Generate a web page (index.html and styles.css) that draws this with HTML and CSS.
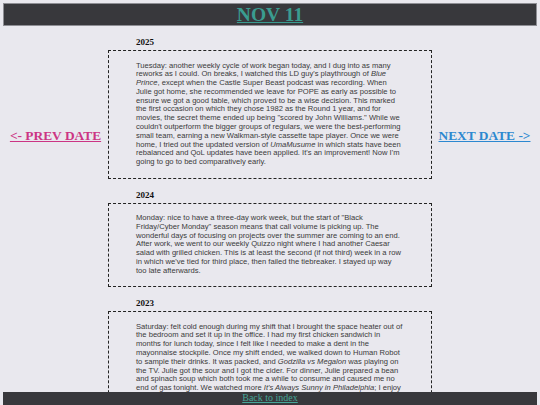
FILE: index.html
```html
<!DOCTYPE html>
<html lang="en">
<head>
    <meta charset="UTF-8">
    <meta name="viewport" content="width=device-width, initial-scale=1.0">
    <title>Nov 11</title>
    <link rel="stylesheet" href="styles.css">
</head>
<body>

    <header class="topbar">
        <a class="dateTitle" href="#">NOV 11</a>
    </header>

    <div class="layout">
        <nav class="sideNav">
            <a class="prevLink" href="#">&lt;- PREV DATE</a>
        </nav>

        <main class="entries">
            <h3 class="year">2025</h3>
            <div class="entry">
                Tuesday: another weekly cycle of work began today, and I dug into as many reworks as I could. On breaks, I watched this LD guy's playthrough of <i>Blue Prince</i>, except when the Castle Super Beast podcast was recording. When Julie got home, she recommended we leave for POPE as early as possible to ensure we got a good table, which proved to be a wise decision. This marked the first occasion on which they chose 1982 as the Round 1 year, and for movies, the secret theme ended up being "scored by John Williams." While we couldn't outperform the bigger groups of regulars, we were the best-performing small team, earning a new Walkman-style cassette tape player. Once we were home, I tried out the updated version of <i>UmaMusume</i> in which stats have been rebalanced and QoL updates have been applied. It's an improvement! Now I'm going to go to bed comparatively early.
            </div>

            <h3 class="year">2024</h3>
            <div class="entry">
                Monday: nice to have a three-day work week, but the start of "Black Friday/Cyber Monday" season means that call volume is picking up. The wonderful days of focusing on projects over the summer are coming to an end. After work, we went to our weekly Quizzo night where I had another Caesar salad with grilled chicken. This is at least the second (if not third) week in a row in which we've tied for third place, then failed the tiebreaker. I stayed up way too late afterwards.
            </div>

            <h3 class="year">2023</h3>
            <div class="entry">
                Saturday: felt cold enough during my shift that I brought the space heater out of the bedroom and set it up in the office. I had my first chicken sandwich in months for lunch today, since I felt like I needed to make a dent in the mayonnaise stockpile. Once my shift ended, we walked down to Human Robot to sample their drinks. It was packed, and <i>Godzilla vs Megalon</i> was playing on the TV. Julie got the sour and I got the cider. For dinner, Julie prepared a bean and spinach soup which both took me a while to consume and caused me no end of gas tonight. We watched more <i>It's Always Sunny in Philadelphia</i>; I enjoy it more with every episode.
            </div>
        </main>

        <nav class="sideNav">
            <a class="nextLink" href="#">NEXT DATE -&gt;</a>
        </nav>
    </div>

    <footer class="bottombar">
        <a class="indexLink" href="#">Back to index</a>
    </footer>

</body>
</html>
```

FILE: styles.css
```css
body {
    margin: 3px;
    background-color: #e9e8ee;
    font-family: "Liberation Serif", "Times New Roman", serif;
}

/* Dark title bar */
.topbar {
    height: 21px;
    background-color: #38383c;
    border: 1px solid #8e8e94;
    text-align: center;
    font-size: 19.5px;
    line-height: 21px;
}

.dateTitle {
    font-weight: bold;
    color: #3a9c90;
}

.layout {
    display: grid;
    grid-template-columns: 1fr 324px 1fr;
    padding-bottom: 20px;
}

.sideNav {
    padding-top: 100px;
    text-align: center;
}

.sideNav a {
    font-size: 13.4px;
    font-weight: bold;
}

.prevLink {
    color: #cc3584;
}

.nextLink {
    color: #2c88d0;
}

.year {
    margin: 11px 0 3px 28px;
    font-size: 9px;
    line-height: 10px;
    color: #111;
}

/* Dashed box around each day's entry */
.entry {
    padding: 10.5px 27px;
    border: 1px dashed #222;
    font-family: "Liberation Sans", Arial, sans-serif;
    font-size: 7.6px;
    line-height: 8.8px;
    color: #3a3a3a;
}

/* Bar pinned to the bottom of the window */
.bottombar {
    position: fixed;
    left: 3px;
    right: 3px;
    bottom: 0;
    height: 13px;
    background-color: #38383c;
    text-align: center;
    font-size: 10px;
    line-height: 12px;
}

.indexLink {
    color: #45a698;
}
```
